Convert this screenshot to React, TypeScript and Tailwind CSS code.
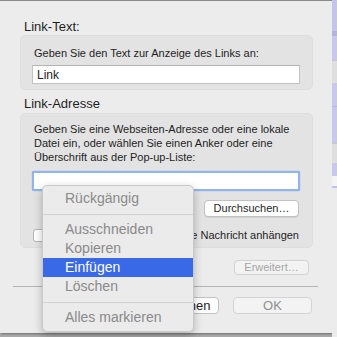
import React from 'react';

const font = { fontFamily: '"Liberation Sans", Arial, sans-serif' };

function MenuItem({ label, active = false }: { label: string; active?: boolean }) {
  return (
    <div
      className={
        active
          ? 'h-[19px] pl-[22px] flex items-center text-[14px] text-white bg-[#3a69e7]'
          : 'h-[19px] pl-[22px] flex items-center text-[14px] text-[#8a8a8a]'
      }
    >
      {label}
    </div>
  );
}

function MenuSeparator() {
  return (
    <div className="h-[12px] flex items-center">
      <div className="h-px w-full bg-[#d3d3d3]" />
    </div>
  );
}

export default function App() {
  return (
    <div className="w-[337px] h-[337px] overflow-hidden bg-[#a9a9a9] flex relative" style={font}>
      {/* dialog */}
      <div className="w-[332px] h-[333px] bg-[#ececec] border-t border-[#8a8a8a] shadow-[1px_1px_2px_rgba(0,0,0,0.35)] flex flex-col text-[#1e1e1e]">
        <div className="mt-[18px] ml-[24px] text-[13px] leading-[16px]">Link-Text:</div>
        <div className="mx-[20px] w-[293px] rounded-[5px] bg-[#e3e3e3] border border-[#dedede] pt-[10px] pb-[5px] pl-[11px] pr-[12px] flex flex-col">
          <div className="pl-[2px] text-[11px] leading-[14px]">Geben Sie den Text zur Anzeige des Links an:</div>
          <div className="mt-[5px] h-[19px] bg-white border border-[#c3c3c3] border-t-[#b3b3b3] flex items-center pl-[4px] text-[12px]">
            Link
          </div>
        </div>

        <div className="mt-[6px] ml-[24px] text-[13px] leading-[16px]">Link-Adresse</div>
        <div className="mt-[1px] mx-[20px] w-[293px] h-[135px] rounded-[5px] bg-[#e3e3e3] border border-[#dedede] pt-[8px] pl-[11px] pr-[12px] flex flex-col">
          <div className="pl-[2px] text-[11px] leading-[14px]">
            Geben Sie eine Webseiten-Adresse oder eine lokale
            <br />
            Datei ein, oder wählen Sie einen Anker oder eine
            <br />
            Überschrift aus der Pop-up-Liste:
          </div>
          <div className="mt-[7px] h-[20px] bg-white border-2 border-[#8fb4ee] rounded-[2px] shadow-[0_0_1px_#5b8fe0]" />
          <div className="mt-[9px] flex justify-end pr-[1px]">
            <div className="h-[17px] w-[95px] bg-white border border-[#c1c1c1] rounded-[4px] flex items-center justify-center text-[11px] shadow-[0_1px_0_rgba(0,0,0,0.08)]">
              Durchsuchen…
            </div>
          </div>
          <div className="mt-[11px] flex items-center pl-[1px]">
            <div className="w-[13px] h-[13px] bg-white border border-[#b5b5b5] rounded-[3px]" />
            <div className="ml-auto pr-[1px] text-[11px] leading-[14px] whitespace-nowrap">Link als Vorschau an die Nachricht anhängen</div>
          </div>
        </div>

        <div className="mt-[12px] flex justify-end pr-[23px]">
          <div className="h-[15px] w-[75px] bg-[#f3f3f3] border border-[#d2d2d2] rounded-[4px] flex items-center justify-center text-[11px] text-[#a5a5a5]">
            Erweitert…
          </div>
        </div>

        <div className="mt-[11px] ml-[13px] w-[305px] h-px bg-[#b4b4b4]" />

        <div className="mt-[10px] flex gap-[14px] pl-[139px]">
          <div className="h-[17px] w-[80px] bg-white border border-[#c1c1c1] rounded-[4px] flex items-center justify-center text-[13px]">
            Abbrechen
          </div>
          <div className="h-[17px] w-[79px] bg-[#f3f3f3] border border-[#d4d4d4] rounded-[4px] flex items-center justify-center text-[13px] text-[#8f8f8f]">
            OK
          </div>
        </div>
      </div>

      {/* window behind, right edge */}
      <div className="w-[5px] h-full flex flex-col">
        <div className="h-[31px] bg-[#c4c4ec]" />
        <div className="h-[5px] bg-[#b3b3dd]" />
        <div className="h-[24px] bg-[#c8c8ee]" />
        <div className="h-[23px] bg-[#dedede] border-t border-[#c8c8c8]" />
        <div className="h-[23px] bg-[#c8c8ee]" />
        <div className="h-[22px] bg-[#c8c8ee] border-t border-[#b9b9e2]" />
        <div className="h-[15px] bg-[#c8c8ee]" />
        <div className="h-[20px] bg-[#dedede] border-t border-[#c8c8c8]" />
        <div className="h-[13px] bg-[#c8c8ee]" />
        <div className="h-[10px] bg-[#f4f4f4]" />
        <div className="h-[2px] bg-[#c0c0ee]" />
        <div className="flex-1 bg-[#ececec]" />
      </div>

      {/* context menu */}
      <div className="absolute left-[42px] top-[185px] w-[152px] h-[147px] bg-[#ebebeb] border border-[#c9c9c9] rounded-[5px] shadow-[0_3px_8px_rgba(0,0,0,0.25)] pt-[3px] overflow-hidden">
        <MenuItem label="Rückgängig" />
        <MenuSeparator />
        <MenuItem label="Ausschneiden" />
        <MenuItem label="Kopieren" />
        <MenuItem label="Einfügen" active />
        <MenuItem label="Löschen" />
        <MenuSeparator />
        <MenuItem label="Alles markieren" />
      </div>
    </div>
  );
}
